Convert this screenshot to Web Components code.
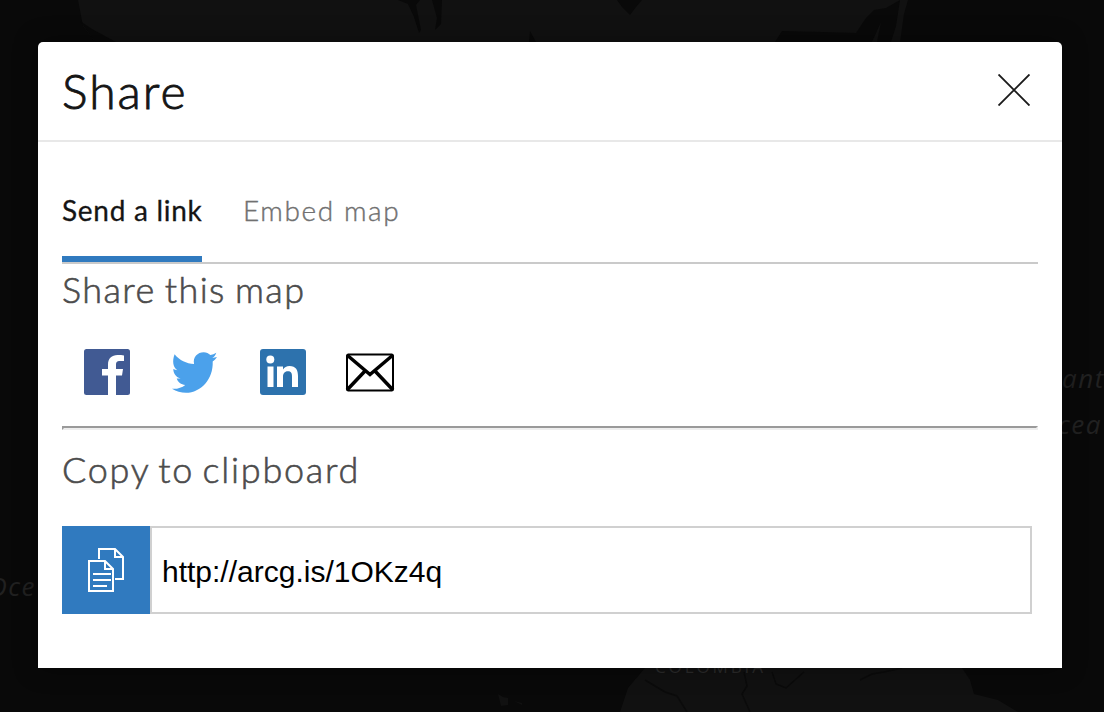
<!DOCTYPE html>
<html lang="en">
<head>
<meta charset="utf-8">
<title>Share</title>
<style>
html,body{margin:0;height:100%;background:#090909;overflow:hidden}
body{font-family:Lato,"Open Sans",sans-serif}
</style>
</head>
<body>
<share-page></share-page>
<script>
const define = (name, html) => {
  const t = document.createElement('template');
  t.innerHTML = html;
  customElements.define(name, class extends HTMLElement {
    constructor() {
      super();
      this.attachShadow({mode: 'open'}).append(t.content.cloneNode(true));
    }
  });
};

define('map-backdrop', `
<style>:host{position:absolute;inset:0;display:block}svg{display:block}</style>
<svg width="1104" height="712" viewBox="0 0 1104 712">
  <path fill="#111" d="M78 0H908L904 14 900 42H95L83 26Z"/>
  <path fill="#090909" d="M398 0l10 4 6 13 5 16 2-3-5-25 4-5zM432 0h10l-1 24-6 6 2-12zM617 0h25l-6 7-6 8-8-8zM530 31l6 11h-7zM775 42l7-11 40 1 34 1 10-15 8-8 12-2 14-8-4 26-5 16h-14l4-20-9 20zM80 21l12 8 24 13H95Z"/>
  <path fill="#111" d="M645 668H962l8 12 4 14 24 6 20 12H620l8-24Z"/>
  <g fill="none" stroke="#0b0b0b" stroke-width="1.5"><path d="M645 680l20 12 12 4 10 16M744 672l3 14-5 8 8 18M772 672l4 12 10 4 18-16M860 680l12-6 12-2 18-4"/></g>
  <path fill="#111" d="M498 694l5 3 5 1v7l-7 1zM514 701l8 2v2z"/>
  <g fill="#212121" font-family="Open Sans, sans-serif" font-size="26">
    <g font-style="italic" letter-spacing="1.5"><text x="1062" y="388">ant</text><text x="1058" y="434">cea</text><text x="-12" y="596">Oce</text></g>
    <text x="655" y="673" font-size="17" fill="#2c2c2c" textLength="108">COLOMBIA</text>
  </g>
</svg>`);

define('share-header', `
<style>
:host{display:flex;align-items:center;justify-content:space-between;height:98px;padding:0 32px 0 24px;border-bottom:2px solid #e8e8e8;color:#151515}
h1{margin:0;font-size:48px;line-height:60px;font-weight:300;letter-spacing:2px;-webkit-text-stroke:.9px}
button{display:block;border:0;padding:0;background:none;line-height:0;margin-top:-3px}
</style>
<h1><slot></slot></h1>
<button aria-label="Close"><svg width="32" height="32" viewBox="0 0 32 32" stroke="#1a1a1a" stroke-width="1.9" fill="none"><path d="M.5.5l31 31M31.5.5l-31 31"/></svg></button>`);

define('share-tabs', `
<style>:host{display:flex;gap:41px;height:120px;border-bottom:2px solid #cacaca}</style>
<slot></slot>`);

define('share-tab', `
<style>
:host{box-sizing:border-box;display:block;height:120px;padding-top:50px;font-size:28px;line-height:36px;white-space:nowrap;color:#707070;font-weight:300;letter-spacing:1.6px;-webkit-text-stroke:.4px}
:host([active]){width:140px;color:#151515;font-weight:400;border-bottom:6px solid #307abf;letter-spacing:.72px;-webkit-text-stroke:.3px}
</style><slot></slot>`);

define('section-title', `
<style>:host{display:block;font-size:36px;line-height:44px;font-weight:300;color:#4c4c4c;letter-spacing:var(--track,1.4px);word-spacing:var(--word,-2px);white-space:nowrap;-webkit-text-stroke:.6px}</style><slot></slot>`);

define('share-icons', `
<style>
:host{display:flex;align-items:center;height:48px;padding-left:22px}
svg{display:block}
.tw{margin-left:42px}.li{margin-left:43px}.ml{margin-left:39px}
</style>
<svg width="46" height="46" viewBox="0 0 46 46"><rect width="46" height="46" rx="2.5" fill="#415a93"/><path fill="#fff" d="M24 46V26.500h-6V20h6v-4.500C24 9.500 27.800 6 33.500 6c2.700 0 4.500.2 6.500.4V12h-4c-3.200 0-4 1.500-4 3.900V20h7l-1 6.500h-6V46Z"/></svg>
<svg class="tw" width="45" height="41" viewBox="0 0 45 41"><path fill="#4ba1eb" d="M45 5c-1.300 1.900-2.500 3.200-4.300 4.500C41.500 27 29 40.800 14 40.800 9 40.800 4.200 39.400 0 36.700c5 .5 9.600-1 13.300-3.800-4.200-.2-7.500-2.800-8.600-6.400h4C4.300 25.300 1.300 21.700 1.300 17c1.300.7 2.600 1.100 4.100 1.200C1 15 0 9.300 2.600 2.200c5 6.200 11.700 9.300 19.500 9.800C20.500 5 25.700.2 31.700.2c2.700 0 5 1.100 6.700 2.900 2.100-.4 4.100-1.200 5.900-2.300-.7 2.200-1.900 3.900-4 5.200 1.700-.2 3.200-.500 4.700-1Z"/></svg>
<svg class="li" width="46" height="46" viewBox="0 0 46 46"><rect width="46" height="46" rx="3" fill="#2d72ad"/><g fill="#fff"><circle cx="10.300" cy="10.500" r="4"/><path d="M7.500 17.500h6V38h-6zM17 17.500h6v3c1.400-2.300 3.500-3.500 6.500-3.500 6.500 0 8.500 4.200 8.500 10v11h-6V28c0-3-.4-5.700-4-5.700-3.700 0-5 2.500-5 5.700v10h-6Z"/></g></svg>
<svg class="ml" width="50" height="40" viewBox="0 0 50 40" fill="none" stroke="#000"><rect x="2" y="2.500" width="46" height="36" rx="1.500" stroke-width="2"/><path stroke-width="3.500" d="M2 3l23 19.500L48 3M2 38l18-19M48 38L30 19"/></svg>`);

define('copy-field', `
<style>
:host{display:flex;width:970px;height:88px}
button{display:flex;align-items:center;justify-content:center;width:88px;height:88px;border:0;padding:0;background:#307abf}
div{box-sizing:border-box;flex:1;border:2px solid #d0d0d0;background:#fff;padding:2px 10px 0;font:30px/84px "Liberation Sans",Arial,sans-serif;color:#000;white-space:nowrap}
</style>
<button aria-label="Copy"><svg width="38" height="46" viewBox="0 0 38 46" fill="none" stroke="#fff" stroke-width="2"><path d="M2 14h16l8 8v22H2zM18 14v8h8M12 12V2h16l8 8v22h-8M28 2v8h8M6 27h18M6 33h18M6 39h14"/></svg></button>
<div><slot></slot></div>`);

define('share-dialog', `
<style>
:host{position:relative;box-sizing:border-box;display:block;width:1024px;height:626px;background:#fff;border-radius:5px 5px 0 0;box-shadow:0 0 24px #0006}
main{padding:0 24px}
share-icons{margin-top:37px}
hr{box-sizing:border-box;height:4px;margin:30px 0 0;border:2px solid;border-color:#9a9a9a #eee #eee #9a9a9a}
section-title{padding-top:3px}
.copy{padding-top:17px;--track:1.75px;--word:-3px}
copy-field{margin-top:35px}
</style>
<share-header>Share</share-header>
<main>
<share-tabs><share-tab active>Send a link</share-tab><share-tab>Embed map</share-tab></share-tabs>
<section-title>Share this map</section-title>
<share-icons></share-icons>
<hr>
<section-title class="copy">Copy to clipboard</section-title>
<copy-field>http://arcg.is/1OKz4q</copy-field>
</main>`);

define('share-page', `
<style>:host{position:relative;box-sizing:border-box;display:block;width:1104px;height:712px;padding:42px 0 0 38px;overflow:hidden;background:#090909}</style>
<map-backdrop></map-backdrop><share-dialog></share-dialog>`);
</script>
</body>
</html>
